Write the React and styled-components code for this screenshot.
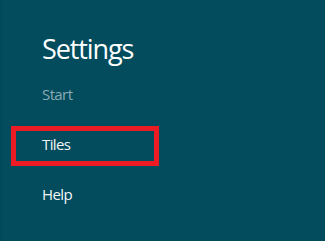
import styled, { createGlobalStyle } from "styled-components";

const GlobalStyle = createGlobalStyle`
  html, body {
    margin: 0;
    padding: 0;
    height: 100%;
    background: #024c5d;
  }
  #root {
    height: 100%;
  }
`;

const Page = styled.div`
  display: flex;
  height: 100%;
  font-family: "Open Sans", "Noto Sans", sans-serif;
`;

const EdgeStrip = styled.div`
  width: 2px;
  background: #01485a;
`;

const Panel = styled.div`
  flex: 1;
  display: flex;
  flex-direction: column;
  padding: 31px 0 0 9px;
`;

const Title = styled.h1`
  margin: 0 0 9px 31px;
  font-size: 27px;
  line-height: 36px;
  font-weight: 400;
  letter-spacing: -1.1px;
  color: #ffffff;
`;

const Menu = styled.div`
  display: flex;
  flex-direction: column;
  gap: 10px;
`;

const Item = styled.div`
  box-sizing: border-box;
  width: 148px;
  height: 40px;
  padding: 0 0 4px 26px;
  display: flex;
  align-items: center;
  font-size: 15px;
  letter-spacing: -0.6px;
  color: ${(p) => (p.$muted ? "#8babb4" : "#f2f6f7")};
  border: 5px solid ${(p) => (p.$selected ? "#ed1c24" : "transparent")};
`;

export default function App() {
  return (
    <>
      <GlobalStyle />
      <Page>
        <EdgeStrip />
        <Panel>
          <Title>Settings</Title>
          <Menu>
            <Item $muted>Start</Item>
            <Item $selected>Tiles</Item>
            <Item>Help</Item>
          </Menu>
        </Panel>
      </Page>
    </>
  );
}
